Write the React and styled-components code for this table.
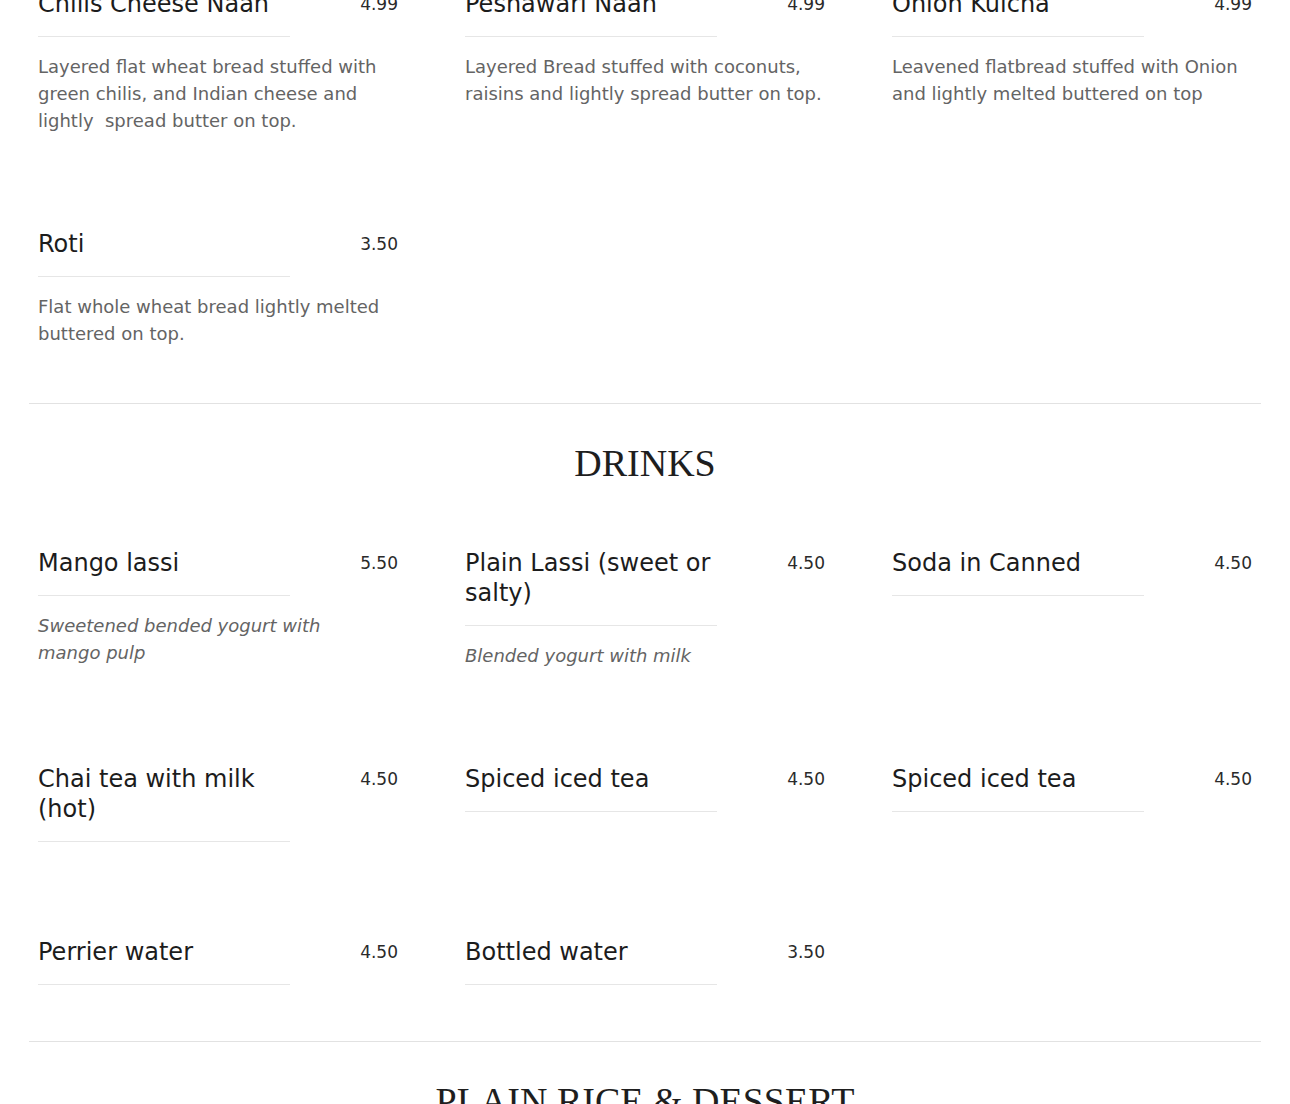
import React from "react";
import styled, { createGlobalStyle } from "styled-components";

const GlobalStyle = createGlobalStyle`
  html, body {
    margin: 0;
    padding: 0;
    background: #ffffff;
  }
  body {
    font-family: "DejaVu Sans", "Open Sans", sans-serif;
    color: #1c1c1c;
    overflow: hidden;
  }
`;

const Page = styled.main`
  width: 1232px;
  margin: -11px auto 0;
`;

const Section = styled.section`
  border-top: ${(p) => (p.$divided ? "1px solid #e2e2e2" : "none")};
  padding-top: ${(p) => (p.$divided ? "36px" : "0")};
`;

const SectionTitle = styled.h2`
  margin: 0 0 62px;
  font-family: "Liberation Serif", "DejaVu Serif", serif;
  font-weight: 400;
  font-size: 38px;
  line-height: 46px;
  text-align: center;
  color: #1e1e1e;
`;

const Grid = styled.div`
  display: grid;
  grid-template-columns: repeat(3, 1fr);
  column-gap: 67px;
  row-gap: 95px;
  padding: 0 9px 56px;
`;

const Item = styled.article`
  display: flex;
  flex-direction: column;
  min-width: 0;
`;

const Head = styled.div`
  display: flex;
  justify-content: space-between;
  align-items: flex-start;
`;

const Name = styled.h3`
  width: 70%;
  margin: 0;
  padding-bottom: 17px;
  border-bottom: 1px solid #e6e6e6;
  font-weight: 400;
  font-size: 24px;
  line-height: 30px;
  color: #1c1c1c;
`;

const Price = styled.span`
  font-size: 17px;
  line-height: 30px;
  color: #2a2a2a;
`;

const Desc = styled.p`
  margin: 16px 0 0;
  padding-right: ${(p) => (p.$italic ? "12px" : "0")};
  font-size: 18px;
  line-height: 27px;
  color: #646464;
  font-style: ${(p) => (p.$italic ? "italic" : "normal")};
`;

const breads = [
  {
    name: "Chilis Cheese Naan",
    price: "4.99",
    desc: "Layered flat wheat bread stuffed with green chilis, and Indian cheese and lightly\u00a0 spread butter on top.",
  },
  {
    name: "Peshawari Naan",
    price: "4.99",
    desc: "Layered Bread stuffed with coconuts, raisins and lightly spread butter on top.",
  },
  {
    name: "Onion Kulcha",
    price: "4.99",
    desc: "Leavened flatbread stuffed with Onion and lightly melted buttered on top",
  },
  {
    name: "Roti",
    price: "3.50",
    desc: "Flat whole wheat bread lightly melted buttered on top.",
  },
];

const drinks = [
  { name: "Mango lassi", price: "5.50", desc: "Sweetened bended yogurt with mango pulp", italic: true },
  { name: "Plain Lassi (sweet or salty)", price: "4.50", desc: "Blended yogurt with milk", italic: true },
  { name: "Soda in Canned", price: "4.50" },
  { name: "Chai tea with milk (hot)", price: "4.50" },
  { name: "Spiced iced tea", price: "4.50" },
  { name: "Spiced iced tea", price: "4.50" },
  { name: "Perrier water", price: "4.50" },
  { name: "Bottled water", price: "3.50" },
];

function MenuItem({ item }) {
  return (
    <Item>
      <Head>
        <Name>{item.name}</Name>
        <Price>{item.price}</Price>
      </Head>
      {item.desc && <Desc $italic={item.italic}>{item.desc}</Desc>}
    </Item>
  );
}

function MenuGrid({ items }) {
  return (
    <Grid>
      {items.map((it, i) => (
        <MenuItem key={i} item={it} />
      ))}
    </Grid>
  );
}

export default function App() {
  return (
    <>
      <GlobalStyle />
      <Page>
        <Section>
          <MenuGrid items={breads} />
        </Section>
        <Section $divided>
          <SectionTitle>DRINKS</SectionTitle>
          <MenuGrid items={drinks} />
        </Section>
        <Section $divided>
          <SectionTitle>PLAIN RICE &amp; DESSERT</SectionTitle>
        </Section>
      </Page>
    </>
  );
}
